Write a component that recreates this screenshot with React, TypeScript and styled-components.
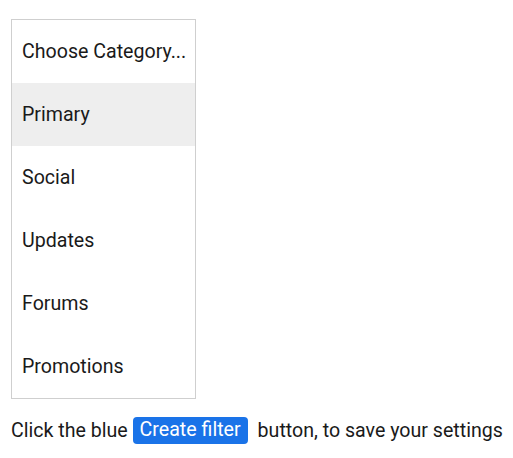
import React from "react";
import styled, { createGlobalStyle } from "styled-components";

const Global = createGlobalStyle`
  html, body { margin: 0; padding: 0; background: #fff; }
  body { font-family: Roboto, "Noto Sans", sans-serif; color: #202124; }
`;

const Page = styled.div`
  padding: 19px 11px 0 11px;
`;

const List = styled.ul`
  list-style: none;
  margin: 0;
  padding: 0;
  width: 183px;
  border: 1px solid #cfcfcf;
`;

const Item = styled.li<{ $active?: boolean }>`
  height: 63px;
  display: flex;
  align-items: center;
  padding-left: 10px;
  font-size: 19.6px;
  color: #1a1a1a;
  background: ${(p) => (p.$active ? "#eeeeee" : "#fff")};
  white-space: nowrap;
`;

const Text = styled.p`
  margin: 18px 0 0 0;
  font-size: 19.6px;
  color: #1a1a1a;
  display: flex;
  align-items: center;
  white-space: pre;
`;

const Btn = styled.span`
  background: #1a73e8;
  color: #fff;
  border-radius: 4px;
  padding: 2px 7px 3px 7px;
  margin: 0 10px 0 0;
  line-height: 22px;
`;

const items = ["Choose Category...", "Primary", "Social", "Updates", "Forums", "Promotions"];

export default function App() {
  return (
    <Page>
      <Global />
      <List>
        {items.map((t, i) => (
          <Item key={t} $active={i === 1}>{t}</Item>
        ))}
      </List>
      <Text>
        {"Click the blue "}<Btn>Create filter</Btn>{"button, to save your settings"}
      </Text>
    </Page>
  );
}
